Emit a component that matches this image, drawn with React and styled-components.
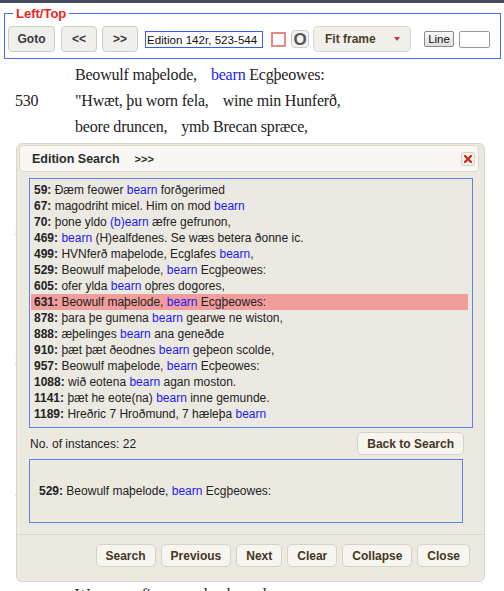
import React from 'react';
import styled, { createGlobalStyle } from 'styled-components';

const GlobalStyle = createGlobalStyle`
  body {
    margin: 0;
    background: #ffffff;
    font-family: "Liberation Sans", Arial, sans-serif;
    overflow: hidden;
  }
`;

const Page = styled.div`
  position: relative;
  width: 504px;
  height: 591px;
  overflow: hidden;
  border-top: 3px solid #454b58;
  box-sizing: border-box;
`;

/* ---------- Left/Top control frame ---------- */

const Frame = styled.fieldset`
  margin: 3px 3px 0 4px;
  padding: 5px 6px 6px 3px;
  border: 1px solid #4a6cf7;
  min-width: 0;
`;

const Legend = styled.legend`
  padding: 0 3px;
  margin-left: 5px;
  color: #e8261c;
  font-weight: bold;
  font-size: 13px;
  line-height: 15px;
`;

const Toolbar = styled.div`
  display: flex;
  align-items: center;
  height: 26px;
`;

const ToolButton = styled.button`
  width: ${(p) => p.$w}px;
  height: 26px;
  margin-left: ${(p) => p.$gap || 0}px;
  padding: 0;
  border: 1px solid #cfcdc8;
  border-radius: 4px;
  background: #f0efec;
  color: #3a3a3a;
  font-family: "Liberation Sans", Arial, sans-serif;
  font-weight: bold;
  font-size: 12px;
`;

const PageField = styled.input`
  box-sizing: border-box;
  width: 118px;
  height: 17px;
  margin-left: 7px;
  padding: 0 1px;
  border: 1px solid #3a5de8;
  font-family: "Liberation Sans", Arial, sans-serif;
  font-size: 11.6px;
  color: #111;
  outline: none;
`;

const MarkBox = styled.span`
  box-sizing: border-box;
  width: 15px;
  height: 15px;
  margin-left: 8px;
  border: 2px solid #e48888;
  background: #fff;
`;

const RingToggle = styled.span`
  box-sizing: border-box;
  width: 18px;
  height: 18px;
  margin-left: 5px;
  display: flex;
  align-items: center;
  justify-content: center;
  border: 1px solid #cbcbcb;
  border-radius: 4px;
  background: #f3f3f3;
  color: #555;
  font-weight: bold;
  font-size: 17px;
  line-height: 1;
`;

const FitSelect = styled.div`
  box-sizing: border-box;
  width: 98px;
  height: 26px;
  margin-left: 4px;
  padding: 0 10px 0 11px;
  display: flex;
  align-items: center;
  justify-content: space-between;
  border: 1px solid #d8d4cb;
  border-radius: 5px;
  background: #f2f0eb;
  color: #4d3d28;
  font-weight: bold;
  font-size: 12px;
`;

const Caret = styled.span`
  width: 0;
  height: 0;
  border-left: 3px solid transparent;
  border-right: 3px solid transparent;
  border-top: 4px solid #d0382a;
`;

const LineButton = styled.span`
  box-sizing: border-box;
  width: 30px;
  height: 16px;
  margin-left: 13px;
  display: flex;
  align-items: center;
  justify-content: center;
  border: 1px solid #8a8a8a;
  border-radius: 2px;
  background: linear-gradient(#fbfbfb, #dedede);
  color: #111;
  font-size: 11.5px;
`;

const LineField = styled.span`
  box-sizing: border-box;
  width: 31px;
  height: 17px;
  margin-left: 5px;
  border: 1px solid #9a9a9a;
  border-radius: 2px;
  background: #fff;
`;

/* ---------- verse text ---------- */

const Verse = styled.div`
  padding: 3px 0 0 15px;
  font-family: "Liberation Serif", "Times New Roman", serif;
  font-size: 16px;
  letter-spacing: -0.2px;
  line-height: 26px;
  color: #222;
`;

const VerseLine = styled.div`
  display: flex;
  white-space: nowrap;
`;

const LineNo = styled.span`
  width: 60px;
  flex: none;
`;

const HalfLine = styled.span`
  margin-left: ${(p) => (p.$second ? 14 : 0)}px;
`;

const Hit = styled.span`
  color: #1a1af5;
`;

/* ---------- search dialog ---------- */

const Dialog = styled.div`
  position: absolute;
  left: 16px;
  top: 140px;
  width: 469px;
  box-sizing: border-box;
  padding: 1px 2px 0 2px;
  border: 1px solid #d9d5cb;
  border-radius: 6px;
  background: #ece9e1;
  font-family: "Liberation Sans", Arial, sans-serif;
  color: #222;
`;

const TitleBar = styled.div`
  height: 27px;
  box-sizing: border-box;
  margin-right: 3px;
  padding: 0 3px 0 12px;
  display: flex;
  align-items: center;
  border: 1px solid #dcd8ce;
  border-radius: 4px;
  background: #f8f7f3;
  font-weight: bold;
  font-size: 12.5px;
  color: #2c2c2c;
`;

const Expand = styled.span`
  margin-left: 15px;
  font-size: 11px;
`;

const CloseBox = styled.span`
  margin-left: auto;
  width: 14px;
  height: 14px;
  box-sizing: border-box;
  display: flex;
  align-items: center;
  justify-content: center;
  border: 1px solid #d4d0c6;
  border-radius: 3px;
  background: #f4f2ec;
`;

const Content = styled.div`
  padding: 6px 9px 11px 10px;
`;

const ResultList = styled.div`
  height: 250px;
  box-sizing: border-box;
  padding: 3px 4px 0 1px;
  border: 1px solid #5f7ff0;
  background: #ece9e3;
  overflow: hidden;
`;

const Row = styled.div`
  height: 16px;
  line-height: 16px;
  padding-left: 3px;
  font-size: 12px;
  white-space: nowrap;
  background: ${(p) => (p.$active ? '#f09d9c' : 'transparent')};
`;

const Num = styled.b`
  font-weight: bold;
`;

const Stats = styled.div`
  margin-top: 4px;
  height: 23px;
  padding-left: 1px;
  display: flex;
  align-items: center;
  justify-content: space-between;
  font-size: 12px;
`;

const DialogButton = styled.button`
  height: 23px;
  padding: 0 9px;
  border: 1px solid #d6d2c7;
  border-radius: 5px;
  background: #f6f5f0;
  color: #45361f;
  font-family: "Liberation Sans", Arial, sans-serif;
  font-weight: bold;
  font-size: 12px;
  margin-right: ${(p) => p.$right || 0}px;
`;

const Preview = styled.div`
  margin-top: 4px;
  width: 434px;
  height: 64px;
  box-sizing: border-box;
  padding-left: 9px;
  display: flex;
  align-items: center;
  border: 1px solid #5f7ff0;
  font-size: 12px;
`;

const ButtonPane = styled.div`
  margin: 0 -2px;
  padding: 9px 14px 14px 0;
  display: flex;
  justify-content: flex-end;
  gap: 5px;
  border-top: 1px solid #dcd8ce;
`;

const verse = [
  ['', 'Beowulf maþelode,', <><Hit>bearn</Hit> Ecgþeowes:</>],
  ['530', '"Hwæt, þu worn fela,', 'wine min Hunferð,'],
  ['', 'beore druncen,', 'ymb Brecan spræce,'],
  ['', 'sægdest from his siðe.', 'Soð ic talige,'],
  ['', 'þæt ic merestrengo', 'maran ahte,'],
  ['', 'earfeþo on yþum,', 'ðonne ænig oþer man.'],
  ['535', 'Wit þæt gecwædon', 'cnihtwesende'],
  ['', 'ond gebeotedon', '(wæron begen þa git'],
  ['', 'on geogoðfeore)', 'þæt wit on garsecg ut'],
  ['', 'aldrum neðdon,', 'ond þæt geæfndon swa.'],
  ['', 'Hæfdon swurd nacod,', 'þa wit on sund reon,'],
  ['540', 'heard on handa;', 'wit unc wið hronfixas'],
  ['', 'werian þohton.', 'No he wiht fram me'],
  ['', 'flodyþum feor', 'fleotan meahte,'],
  ['', 'hraþor on holme;', 'no ic fram him wolde.'],
  ['', 'Ða wit ætsomne', 'on sæ wæron'],
  ['545', 'fif nihta fyrst,', 'oþþæt unc flod todraf,'],
  ['', 'wado weallende,', 'wedera cealdost,'],
  ['', 'nipende niht,', 'ond norþanwind'],
  ['', 'heaðogrim ondhwearf;', 'hreo wæron yþa.'],
  ['', 'Wæs merefixa', 'mod onhrered;'],
  ['550', 'Þær me wið laðum', 'licsyrce min,'],
];

// [line number, text before the hit, hit, text after]
const results = [
  ['59', 'Đæm feower ', 'bearn', ' forðgerimed'],
  ['67', 'magodriht micel. Him on mod ', 'bearn', ''],
  ['70', 'þone yldo ', '(b)earn', ' æfre gefrunon,'],
  ['469', '', 'bearn', ' (H)ealfdenes. Se wæs betera ðonne ic.'],
  ['499', 'HVNferð maþelode, Ecglafes ', 'bearn', ','],
  ['529', 'Beowulf maþelode, ', 'bearn', ' Ecgþeowes:'],
  ['605', 'ofer ylda ', 'bearn', ' oþres dogores,'],
  ['631', 'Beowulf maþelode, ', 'bearn', ' Ecgþeowes:'],
  ['878', 'þara þe gumena ', 'bearn', ' gearwe ne wiston,'],
  ['888', 'æþelinges ', 'bearn', ' ana geneðde'],
  ['910', 'þæt þæt ðeodnes ', 'bearn', ' geþeon scolde,'],
  ['957', 'Beowulf maþelode, ', 'bearn', ' Ecþeowes:'],
  ['1088', 'wið eotena ', 'bearn', ' agan moston.'],
  ['1141', 'þæt he eote(na) ', 'bearn', ' inne gemunde.'],
  ['1189', 'Hreðric 7 Hroðmund, 7 hæleþa ', 'bearn', ''],
];

const CloseIcon = () => (
  <svg width="8" height="8" viewBox="0 0 8 8">
    <path d="M1 1 L7 7 M7 1 L1 7" stroke="#c62a1c" strokeWidth="2.2" strokeLinecap="square" />
  </svg>
);

const ResultRow = ({ num, before, hit, after, active }) => (
  <Row $active={active}>
    <Num>{num}:</Num> {before}
    <Hit>{hit}</Hit>
    {after}
  </Row>
);

export default function App() {
  return (
    <>
      <GlobalStyle />
      <Page>
        <Frame>
          <Legend>Left/Top</Legend>
          <Toolbar>
            <ToolButton $w={47}>Goto</ToolButton>
            <ToolButton $w={36} $gap={6}>&lt;&lt;</ToolButton>
            <ToolButton $w={36} $gap={5}>&gt;&gt;</ToolButton>
            <PageField readOnly value="Edition 142r, 523-544" />
            <MarkBox />
            <RingToggle>O</RingToggle>
            <FitSelect>
              Fit frame
              <Caret />
            </FitSelect>
            <LineButton>Line</LineButton>
            <LineField />
          </Toolbar>
        </Frame>

        <Verse>
          {verse.map(([no, a, b], i) => (
            <VerseLine key={i}>
              <LineNo>{no}</LineNo>
              <HalfLine>{a}</HalfLine>
              <HalfLine $second>{b}</HalfLine>
            </VerseLine>
          ))}
        </Verse>

        <Dialog>
          <TitleBar>
            Edition Search
            <Expand>&gt;&gt;&gt;</Expand>
            <CloseBox>
              <CloseIcon />
            </CloseBox>
          </TitleBar>
          <Content>
            <ResultList>
              {results.map(([num, before, hit, after]) => (
                <ResultRow
                  key={num}
                  num={num}
                  before={before}
                  hit={hit}
                  after={after}
                  active={num === '631'}
                />
              ))}
            </ResultList>
            <Stats>
              No. of instances: 22
              <DialogButton $right={9}>Back to Search</DialogButton>
            </Stats>
            <Preview>
              <span>
                <Num>529:</Num> Beowulf maþelode, <Hit>bearn</Hit> Ecgþeowes:
              </span>
            </Preview>
          </Content>
          <ButtonPane>
            <DialogButton>Search</DialogButton>
            <DialogButton>Previous</DialogButton>
            <DialogButton>Next</DialogButton>
            <DialogButton>Clear</DialogButton>
            <DialogButton>Collapse</DialogButton>
            <DialogButton>Close</DialogButton>
          </ButtonPane>
        </Dialog>
      </Page>
    </>
  );
}
